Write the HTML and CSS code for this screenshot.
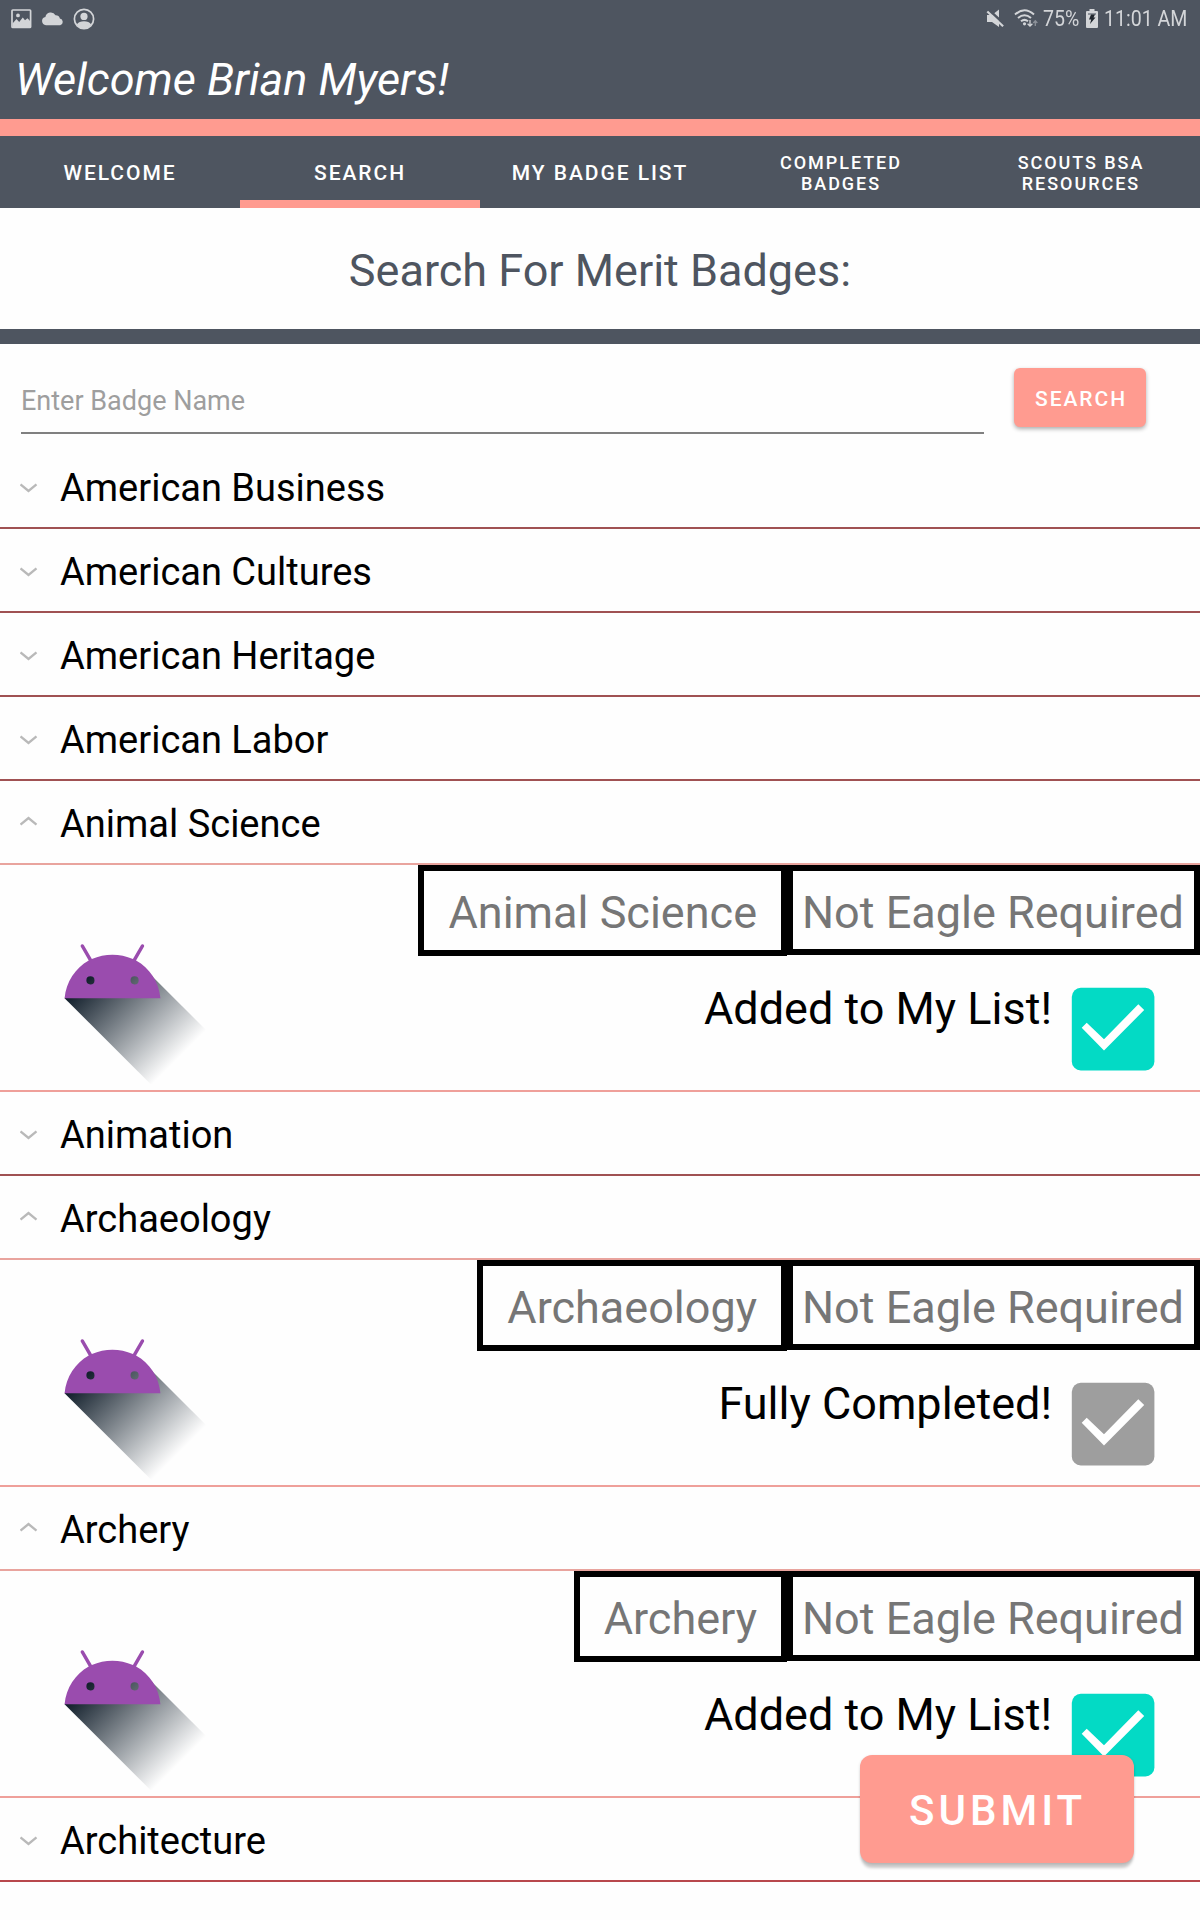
FILE: index.html
```html
<!DOCTYPE html>
<html lang="en">
<head>
<meta charset="utf-8">
<title>Merit Badges</title>
<link rel="stylesheet" href="styles.css">
</head>
<body>
<svg class="defs" width="0" height="0" aria-hidden="true">
  <defs>
    <linearGradient id="fade" gradientUnits="userSpaceOnUse" x1="42.95" y1="49.6" x2="85.85" y2="92.5">
      <stop offset="0" stop-color="#071522"/>
      <stop offset="1" stop-color="#071522" stop-opacity="0"/>
    </linearGradient>
    <symbol id="robot" viewBox="0 0 108 108">
      <path fill="url(#fade)" d="M31 63.928s6.4-11 12.1-13.1c7.2-2.6 26-1.4 26-1.4l38.1 38.1-.2 21.4-32-1z"/>
      <path fill="#9a4cae" d="M65.3 45.828l3.8-6.6c.2-.4.1-.9-.3-1.1-.4-.2-.9-.1-1.1.3l-3.9 6.7c-6.3-2.8-13.4-2.8-19.7 0l-3.9-6.7c-.2-.4-.7-.5-1.1-.3-.4.2-.5.7-.3 1.1l3.8 6.6c-6.4 3.6-10.9 10.2-11.6 18.1h46c-.7-7.9-5.2-14.500-11.700-18.100zM43.400 57.328a1.950 1.950 0 1 1 .01-3.9 1.950 1.950 0 0 1-.01 3.9zM64.600 57.328a1.950 1.950 0 1 1 .01-3.9 1.950 1.950 0 0 1-.01 3.9z" fill-rule="evenodd"/>
    </symbol>
    <symbol id="check" viewBox="0 0 84 84">
      <rect x=".8" y=".8" width="82.600" height="82.600" rx="9" fill="currentColor"/>
      <path fill="#fff" d="M10.700 40.700L33 63.500 73.200 23l-5.900-5.700L33 52.300 15.700 35.700z"/>
    </symbol>
    <symbol id="down" viewBox="0 0 18 10"><path d="M.5 1.300l8 6.700 8-6.700" fill="none" stroke="#b9b9b9" stroke-width="2.300"/></symbol>
    <symbol id="up" viewBox="0 0 18 10"><path d="M.5 8.700l8-6.700 8 6.700" fill="none" stroke="#b9b9b9" stroke-width="2.300"/></symbol>
  </defs>
</svg>

<header class="header">
  <div class="status">
    <div class="status-left">
      <svg width="21" height="20" viewBox="0 0 21 20"><rect x="1" y="1" width="18.600" height="17.500" rx=".8" fill="none" stroke="#d3d5d8" stroke-width="1.700"/><path fill="#d3d5d8" d="M1.500 14.500l4-4.500 2.700 3 3.600-4.500 2.200 2.800 2.500-2 3 3.200v6.500H1.500zM7 4.500a1.900 1.900 0 1 1-.01 3.800A1.900 1.900 0 0 1 7 4.500z"/></svg>
      <svg width="23" height="14" viewBox="0 0 22 14"><path fill="#d3d5d8" d="M4.500 13.200a4.200 4.200 0 0 1-.6-8.300A5.400 5.400 0 0 1 14 3.300a4.400 4.400 0 0 1 4.400 3.100 3.500 3.500 0 0 1 .3 6.800z"/></svg>
      <svg width="22" height="22" viewBox="0 0 22 22"><circle cx="11" cy="11" r="9.600" fill="none" stroke="#d3d5d8" stroke-width="1.700"/><circle cx="11" cy="8.400" r="3.600" fill="#d3d5d8"/><path fill="#d3d5d8" d="M3.800 16.500c1.400-2.400 4-3.200 7.200-3.200s5.800.8 7.200 3.200c-1.700 3-4.200 4.500-7.200 4.500s-5.500-1.500-7.200-4.500z"/></svg>
    </div>
    <div class="status-right">
      <svg class="mute" width="19" height="20" viewBox="0 0 19 20"><path fill="#d3d5d8" d="M1 6h5l7-5.500v17.500l-7-5H1z"/><path d="M3 1l15 14" stroke="#4e5560" stroke-width="2.500"/><path d="M1.300 2.500l15.800 14.700" stroke="#d3d5d8" stroke-width="2.200"/></svg>
      <svg class="wifi" width="24" height="19" viewBox="0 0 24 19"><g fill="none" stroke="#d3d5d8" stroke-width="2"><path d="M1 5.500q9.500-8.500 19 0M4 9q6.500-5.500 13 0M7 12.300q3.500-2.800 7 0"/></g><circle cx="10.500" cy="14.800" r="1.600" fill="#d3d5d8"/><path d="M16 11v6m-2.400-2.300L16 17l2.400-2.300" fill="none" stroke="#d3d5d8" stroke-width="1.300"/><path d="M21.300 17v-5m-2 2l2-2.300 2 2.300" fill="none" stroke="#8d929a" stroke-width="1.300"/></svg>
      <span class="pct">75%</span>
      <svg class="battery" width="12" height="19" viewBox="0 0 12 19"><path fill="#d3d5d8" d="M3.500 0h5v2H11q1 0 1 1v15q0 1-1 1H1q-1 0-1-1V3q0-1 1-1h2.500z"/><path fill="#8d929a" d="M2 4h8v2H2z"/><path fill="#20262d" d="M5 5.500h4L7.500 8.500h2L4 15l1.200-4.500H3z"/></svg>
      <span class="clock">11:01 AM</span>
    </div>
  </div>
  <h1 class="greeting">Welcome Brian Myers!</h1>
</header>

<nav class="tabs">
  <a class="tab">WELCOME</a>
  <a class="tab active">SEARCH</a>
  <a class="tab">MY BADGE LIST</a>
  <a class="tab small">COMPLETED<br>BADGES</a>
  <a class="tab small">SCOUTS BSA<br>RESOURCES</a>
</nav>

<h2 class="title">Search For Merit Badges:</h2>

<div class="search">
  <div class="field">Enter Badge Name</div>
  <button class="btn search-btn">SEARCH</button>
</div>

<main class="list">
  <div class="row"><svg class="chev"><use href="#down"/></svg><span>American Business</span></div>
  <div class="row"><svg class="chev"><use href="#down"/></svg><span>American Cultures</span></div>
  <div class="row"><svg class="chev"><use href="#down"/></svg><span>American Heritage</span></div>
  <div class="row"><svg class="chev"><use href="#down"/></svg><span>American Labor</span></div>
  <div class="row open"><svg class="chev"><use href="#up"/></svg><span>Animal Science</span></div>
  <section class="detail">
    <svg class="robot"><use href="#robot"/></svg>
    <div class="info">
      <div class="tags"><div class="name">Animal Science</div><div class="eagle">Not Eagle Required</div></div>
      <div class="state"><span>Added to My List!</span><svg class="check"><use href="#check"/></svg></div>
    </div>
  </section>
  <div class="row"><svg class="chev"><use href="#down"/></svg><span>Animation</span></div>
  <div class="row open"><svg class="chev"><use href="#up"/></svg><span>Archaeology</span></div>
  <section class="detail">
    <svg class="robot"><use href="#robot"/></svg>
    <div class="info">
      <div class="tags"><div class="name">Archaeology</div><div class="eagle">Not Eagle Required</div></div>
      <div class="state"><span>Fully Completed!</span><svg class="check done"><use href="#check"/></svg></div>
    </div>
  </section>
  <div class="row open"><svg class="chev"><use href="#up"/></svg><span>Archery</span></div>
  <section class="detail">
    <svg class="robot"><use href="#robot"/></svg>
    <div class="info">
      <div class="tags"><div class="name">Archery</div><div class="eagle">Not Eagle Required</div></div>
      <div class="state"><span>Added to My List!</span><svg class="check"><use href="#check"/></svg></div>
    </div>
  </section>
  <div class="row last"><svg class="chev"><use href="#down"/></svg><span>Architecture</span></div>
</main>
<button class="btn submit">SUBMIT</button>
</body>
</html>
```
FILE: styles.css
```css
* { box-sizing: border-box; }
body {
  margin: 0;
  height: 1920px;
  position: relative;
  overflow: hidden;
  background: #fefefe;
  color: #000;
  font-family: Roboto, "Liberation Sans", sans-serif;
}
svg { display: block; flex: none; }
.defs { position: absolute; }
h1, h2 { margin: 0; font-weight: 400; }

.header {
  height: 136px;
  background: #4e5560;
  border-bottom: 17px solid #ff9b90;
  color: #fff;
}
.status {
  height: 37px;
  display: flex;
  justify-content: space-between;
  color: #d3d5d8;
  font-size: 21.5px;
}
.status-left, .status-right { display: flex; align-items: center; }
.status-left { padding-left: 11px; gap: 9px; }
.status-right { padding-right: 12px; line-height: 38px; white-space: nowrap; }
.mute { margin-right: 9px; }
.wifi { margin-right: 5px; }
.pct, .clock { display: block; transform: scaleX(.91); transform-origin: left; }
.pct { width: 36px; margin-right: 7px; }
.battery { margin-right: 6px; }
.clock { width: 84px; }
.greeting {
  padding: 4px 0 0 15px;
  font-size: 45px;
  line-height: 78px;
  font-style: italic;
}

.tabs {
  height: 72px;
  display: grid;
  grid-template-columns: repeat(5, 1fr);
  background: #4e5560;
  color: #fff;
}
.tab {
  display: flex;
  align-items: center;
  justify-content: center;
  padding-top: 2px;
  text-align: center;
  font-size: 21px;
  line-height: 24px;
  font-weight: 500;
  letter-spacing: 1.95px;
}
.tab.active { border-bottom: 8px solid #ff9b90; padding-top: 10px; }
.tab.small { font-size: 18px; line-height: 21px; padding: 1px 0 0 2px; }

.title {
  height: 136px;
  padding-top: 5px;
  border-bottom: 15px solid #4e5560;
  color: #4e5560;
  font-size: 45px;
  line-height: 116px;
  text-align: center;
}

.search {
  height: 101px;
  display: flex;
  align-items: flex-start;
  padding: 24px 54px 0 21px;
}
.field {
  width: 963px;
  height: 66px;
  margin-right: 30px;
  border-bottom: 2px solid #808080;
  color: #9e9e9e;
  font-size: 27px;
  line-height: 66px;
}
.btn {
  border: 0;
  background: #ff9b90;
  color: #fff;
  font-family: inherit;
  font-weight: 500;
}
.search-btn {
  width: 132px;
  height: 59px;
  padding: 3px 0 0 2px;
  border-radius: 6px;
  font-size: 21px;
  letter-spacing: 1.95px;
  box-shadow: 0 2px 4px rgba(0, 0, 0, .32);
}

.row {
  height: 84px;
  display: flex;
  align-items: center;
  padding-left: 20px;
  border-bottom: 2px solid #a05153;
  font-size: 38px;
}
.row span { padding: 3px 0 0 22px; }
.row.open { border-color: #e9a49e; }
.row.last { border-color: #b8484c; }
.chev { width: 18px; height: 10px; margin-top: 3px; }
.open .chev { margin-top: -2px; }

.detail {
  height: 227px;
  display: flex;
  justify-content: space-between;
  border-bottom: 2px solid #efa09a;
}
.robot { width: 225px; height: 225px; }
.tags {
  display: flex;
  align-items: flex-start;
  justify-content: flex-end;
  color: #767676;
  font-size: 45px;
  line-height: 74px;
}
.name, .eagle { border: 6px solid #000; padding-top: 5px; white-space: nowrap; }
.name { height: 91px; padding-left: 24px; padding-right: 24px; }
.eagle { width: 413px; height: 90px; padding-left: 9px; }
.state {
  display: flex;
  justify-content: flex-end;
  padding: 31px 45px 0 0;
  font-size: 45px;
  line-height: 44px;
}
.state span { padding-right: 19px; }
.check { width: 84px; height: 84px; color: #03dac5; filter: blur(.6px); }
.check.done { color: #9e9e9e; }

.submit {
  position: absolute;
  left: 860px;
  top: 1755px;
  width: 274px;
  height: 108px;
  padding: 3px 0 0 1px;
  border-radius: 12px;
  font-size: 42px;
  letter-spacing: 4px;
  box-shadow: 0 6px 3px -1px rgba(0, 0, 0, .2), 0 1px 3px rgba(0, 0, 0, .15);
}
```
